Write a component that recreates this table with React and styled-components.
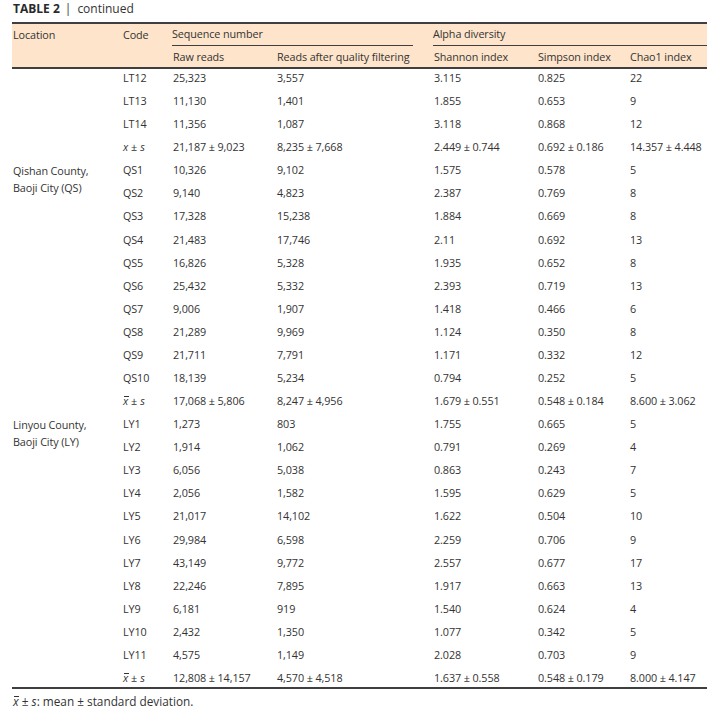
import React from "react";
import styled, { createGlobalStyle } from "styled-components";

const Global = createGlobalStyle`
  html, body { margin: 0; padding: 0; background: #ffffff; }
  body { font-family: "Open Sans", "Noto Sans", sans-serif; color: #333333; }
`;

const COLS = "110px 50px 104px 157px 104px 92px 78px";
const INK = "#3f3f3f";

const Page = styled.div`
  width: 720px;
  box-sizing: border-box;
  padding: 0 13px 0 12px;
`;

const Title = styled.div`
  height: 22px;
  line-height: 17px;
  font-size: 12px;
  padding-left: 1px;
  color: #333;
  b { font-weight: 700; color: #2a2a2a; }
  span { margin: 0 6px 0 5px; }
`;

const Table = styled.div`
  border-top: 2px solid ${INK};
  border-bottom: 2px solid ${INK};
  font-size: 10.8px;
  letter-spacing: -0.1px;
`;

const Head = styled.div`
  display: grid;
  grid-template-columns: ${COLS};
  grid-template-rows: 22px 21px;
  background: #fde4ca;
  border-bottom: 2px solid ${INK};
`;

const HeadCell = styled.div`
  grid-column: ${(p) => p.$col};
  grid-row: ${(p) => p.$row};
  display: flex;
  align-items: ${(p) => (p.$top ? "flex-start" : "center")};
  padding-top: ${(p) => (p.$top ? "3px" : "0")};
  line-height: 16px;
  padding-left: 1px;
  white-space: nowrap;
`;

const GroupCell = styled(HeadCell)`
  border-bottom: 1px solid ${INK};
  margin-right: ${(p) => p.$trim || 0}px;
  padding-left: 0;
  padding-bottom: 1px;
  box-sizing: border-box;
`;

const Body = styled.div`
  display: flex;
  flex-direction: column;
  gap: 5.08px;
`;

const Row = styled.div`
  display: grid;
  grid-template-columns: ${COLS};
  height: 18px;
  line-height: 18px;
`;

const Cell = styled.div`
  padding-left: 1px;
  white-space: nowrap;
`;

const LocCell = styled.div`
  padding: 0.5px 20px 0 1px;
  line-height: 17px;
  white-space: normal;
  position: relative;
  z-index: 1;
`;

const Bar = styled.i`
  position: relative;
  font-style: italic;
  &::before {
    content: "";
    position: absolute;
    left: 0.5px;
    right: -0.5px;
    top: 3px;
    border-top: 1px solid currentColor;
  }
`;

const Mean = styled.span`
  i { font-style: italic; }
  .pm { margin: 0 3px; }
`;

const Foot = styled.div`
  padding-left: 1px;
  font-size: 11.8px;
  line-height: 18px;
  margin-top: 3px;
  i { font-style: italic; }
`;

const MeanLabel = ({ bar }) => (
  <Mean>
    {bar ? <Bar>x</Bar> : <i>x</i>}
    <span className="pm">±</span>
    <i>s</i>
  </Mean>
);

const rows = [
  { code: "LT12", v: ["25,323", "3,557", "3.115", "0.825", "22"] },
  { code: "LT13", v: ["11,130", "1,401", "1.855", "0.653", "9"] },
  { code: "LT14", v: ["11,356", "1,087", "3.118", "0.868", "12"] },
  { mean: true, bar: false, v: ["21,187 ± 9,023", "8,235 ± 7,668", "2.449 ± 0.744", "0.692 ± 0.186", "14.357 ± 4.448"] },
  { loc: "Qishan County, Baoji City (QS)", code: "QS1", v: ["10,326", "9,102", "1.575", "0.578", "5"] },
  { code: "QS2", v: ["9,140", "4,823", "2.387", "0.769", "8"] },
  { code: "QS3", v: ["17,328", "15,238", "1.884", "0.669", "8"] },
  { code: "QS4", v: ["21,483", "17,746", "2.11", "0.692", "13"] },
  { code: "QS5", v: ["16,826", "5,328", "1.935", "0.652", "8"] },
  { code: "QS6", v: ["25,432", "5,332", "2.393", "0.719", "13"] },
  { code: "QS7", v: ["9,006", "1,907", "1.418", "0.466", "6"] },
  { code: "QS8", v: ["21,289", "9,969", "1.124", "0.350", "8"] },
  { code: "QS9", v: ["21,711", "7,791", "1.171", "0.332", "12"] },
  { code: "QS10", v: ["18,139", "5,234", "0.794", "0.252", "5"] },
  { mean: true, bar: true, v: ["17,068 ± 5,806", "8,247 ± 4,956", "1.679 ± 0.551", "0.548 ± 0.184", "8.600 ± 3.062"] },
  { loc: "Linyou County, Baoji City (LY)", code: "LY1", v: ["1,273", "803", "1.755", "0.665", "5"] },
  { code: "LY2", v: ["1,914", "1,062", "0.791", "0.269", "4"] },
  { code: "LY3", v: ["6,056", "5,038", "0.863", "0.243", "7"] },
  { code: "LY4", v: ["2,056", "1,582", "1.595", "0.629", "5"] },
  { code: "LY5", v: ["21,017", "14,102", "1.622", "0.504", "10"] },
  { code: "LY6", v: ["29,984", "6,598", "2.259", "0.706", "9"] },
  { code: "LY7", v: ["43,149", "9,772", "2.557", "0.677", "17"] },
  { code: "LY8", v: ["22,246", "7,895", "1.917", "0.663", "13"] },
  { code: "LY9", v: ["6,181", "919", "1.540", "0.624", "4"] },
  { code: "LY10", v: ["2,432", "1,350", "1.077", "0.342", "5"] },
  { code: "LY11", v: ["4,575", "1,149", "2.028", "0.703", "9"] },
  { mean: true, bar: true, v: ["12,808 ± 14,157", "4,570 ± 4,518", "1.637 ± 0.558", "0.548 ± 0.179", "8.000 ± 4.147"] },
];

export default function App() {
  return (
    <Page>
      <Global />
      <Title>
        <b>TABLE 2</b>
        <span>|</span>continued
      </Title>
      <Table>
        <Head>
          <HeadCell $col="1" $row="1 / 3" $top>Location</HeadCell>
          <HeadCell $col="2" $row="1 / 3" $top>Code</HeadCell>
          <GroupCell $col="3 / 5" $row="1" $trim={20}>Sequence number</GroupCell>
          <GroupCell $col="5 / 8" $row="1">Alpha diversity</GroupCell>
          <HeadCell $col="3" $row="2">Raw reads</HeadCell>
          <HeadCell $col="4" $row="2">Reads after quality filtering</HeadCell>
          <HeadCell $col="5" $row="2">Shannon index</HeadCell>
          <HeadCell $col="6" $row="2">Simpson index</HeadCell>
          <HeadCell $col="7" $row="2">Chao1 index</HeadCell>
        </Head>
        <Body>
          {rows.map((r, i) => (
            <Row key={i}>
              <LocCell>{r.loc || ""}</LocCell>
              <Cell>{r.mean ? <MeanLabel bar={r.bar} /> : r.code}</Cell>
              {r.v.map((x, j) => (
                <Cell key={j}>{x}</Cell>
              ))}
            </Row>
          ))}
        </Body>
      </Table>
      <Foot>
        <Bar>x</Bar> ± <i>s</i>: mean ± standard deviation.
      </Foot>
    </Page>
  );
}
